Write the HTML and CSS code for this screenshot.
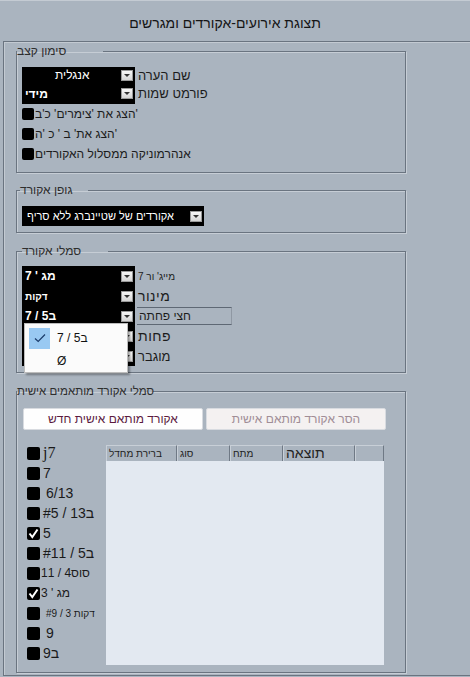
FILE: index.html
```html
<!DOCTYPE html>
<html>
<head>
<meta charset="utf-8">
<title>תצוגת אירועים-אקורדים ומגרשים</title>
<link rel="stylesheet" href="styles.css">
</head>
<body>
<div class="window">
  <header class="titlebar">תצוגת אירועים-אקורדים ומגרשים</header>
  <main class="frame">

    <fieldset class="group g1">
      <legend class="lg1">סימון קצב</legend>
      <div class="field h16">
        <div class="select"><span class="val v-name">אנגלית</span><span class="arrow"></span></div>
        <span class="label">שם הערה</span>
      </div>
      <div class="field h21">
        <div class="select"><span class="val bold">מידי</span><span class="arrow"></span></div>
        <span class="label">פורמט שמות</span>
      </div>
      <div class="check"><span class="box"></span><span class="ctext">הצג את 'צימרים' כ'ב'</span></div>
      <div class="check"><span class="box"></span><span class="ctext">הצג את' ב ' כ 'ה'</span></div>
      <div class="check"><span class="box"></span><span class="ctext">אנהרמוניקה ממסלול האקורדים</span></div>
    </fieldset>

    <fieldset class="group g2">
      <legend class="lg2">גופן אקורד</legend>
      <div class="field h20">
        <div class="select wide"><span class="val font">אקורדים של שטיינברג ללא סריף</span><span class="arrow"></span></div>
      </div>
    </fieldset>

    <fieldset class="group g3">
      <legend class="lg3">סמלי אקורד</legend>
      <div class="symbols">
        <div class="field h20">
          <div class="select"><span class="val bold">מג ' 7</span><span class="arrow"></span></div>
          <span class="label small">מייג' ור 7</span>
        </div>
        <div class="field h20">
          <div class="select"><span class="val bold tiny">דקות</span><span class="arrow"></span></div>
          <span class="label big">מינור</span>
        </div>
        <div class="field h20">
          <div class="select"><span class="val bold">ב5 / 7</span><span class="arrow"></span></div>
          <span class="label boxed">חצי פחתה</span>
        </div>
        <div class="field h20">
          <div class="select"><span class="val bold">o</span><span class="arrow"></span></div>
          <span class="label big">פחות</span>
        </div>
        <div class="field h20">
          <div class="select"><span class="val bold">+</span><span class="arrow"></span></div>
          <span class="label">מוגבר</span>
        </div>
        <div class="popup">
          <div class="item selected"><span class="tick"><svg width="12" height="10" viewBox="0 0 12 10"><path d="M1 5.5 L4.2 8.5 L11 1.5" fill="none" stroke="#1b3c6b" stroke-width="1.2"/></svg></span><span class="itext">ב5 / 7</span></div>
          <div class="item"><span class="tick"></span><span class="itext">Ø</span></div>
        </div>
      </div>
    </fieldset>

    <fieldset class="group g4">
      <legend class="lg4">סמלי אקורד מותאמים אישית</legend>
      <div class="buttons">
        <button class="btn primary">אקורד מותאם אישית חדש</button>
        <button class="btn disabled">הסר אקורד מותאם אישית</button>
      </div>
      <div class="custom">
        <div class="checklist">
          <div class="citem"><span class="box"></span><span class="ltext serif">j7</span></div>
          <div class="citem"><span class="box"></span><span class="ltext">7</span></div>
          <div class="citem"><span class="box"></span><span class="ltext pad">6/13</span></div>
          <div class="citem"><span class="box"></span><span class="ltext">ב13 / #5</span></div>
          <div class="citem"><span class="box checked"><svg width="13" height="13" viewBox="0 0 13 13"><path d="M2.5 6.5 L5.3 10 L10.5 2.5" fill="none" stroke="#fff" stroke-width="2"/></svg></span><span class="ltext">5</span></div>
          <div class="citem"><span class="box"></span><span class="ltext">ב5 / #11</span></div>
          <div class="citem"><span class="box"></span><span class="ltext mid">סוס4 / 11</span></div>
          <div class="citem"><span class="box checked"><svg width="13" height="13" viewBox="0 0 13 13"><path d="M2.5 6.5 L5.3 10 L10.5 2.5" fill="none" stroke="#fff" stroke-width="2"/></svg></span><span class="ltext mid">מג ' 3</span></div>
          <div class="citem"><span class="box"></span><span class="ltext small pad">דקות 3 / #9</span></div>
          <div class="citem"><span class="box"></span><span class="ltext pad">9</span></div>
          <div class="citem"><span class="box"></span><span class="ltext">ב9</span></div>
        </div>
        <div class="table">
          <div class="th small">ברירת מחדל</div>
          <div class="th small">סוג</div>
          <div class="th small">מתח</div>
          <div class="th large">תוצאה</div>
          <div class="th"></div>
          <div class="tbody"></div>
        </div>
      </div>
    </fieldset>

  </main>
</div>
</body>
</html>
```

FILE: styles.css
```css
* { box-sizing: border-box; }
html, body { margin: 0; padding: 0; }
body {
  width: 470px;
  height: 677px;
  overflow: hidden;
  background: #aab4bf;
  font-family: "Liberation Sans", "DejaVu Sans", sans-serif;
  color: #1c1c1c;
}
.window {
  border-top: 1px solid #c4cbd3;
}
.titlebar {
  height: 40px;
  padding: 13px 20px 0 0;
  text-align: center;
  font-size: 14px;
  line-height: 18px;
  color: #151515;
}
.frame {
  margin-left: 3px;
  border-left: 1px solid #6a7480;
  border-top: 1px solid #6a7480;
  border-bottom: 1px solid #6a7480;
  box-shadow: inset 1px 1px 0 #c3cad2;
  padding: 2px 0 2px 12px;
}
.group {
  width: 390px;
  margin: 0;
  min-width: 0;
  border: 1px solid #6a7480;
  box-shadow: 1px 1px 0 #c6cdd5, inset 1px 1px 0 #c6cdd5;
  padding: 0 0 0 5px;
}
.group + .group { margin-top: 11px; }
.g2 { margin-top: 10px !important; }
.group legend {
  padding: 0;
  height: 14px;
  font-size: 12px;
  line-height: 14px;
  color: #2e2e2e;
  text-align: left;
  white-space: nowrap;
}
.lg1 { width: 86px; margin-left: -5px; }
.lg2 { width: 68px; margin-left: -2px; }
.lg3 { width: 86px; margin-left: 0; }
.lg4 { width: 136px; margin-left: -6px; font-size: 11.5px !important; }

.g1 { padding-top: 9px; padding-bottom: 8px; }
.g2 { padding-top: 9px; padding-bottom: 6px; }
.g3 { padding-top: 8px; padding-bottom: 6px; }
.g4 { padding-top: 10px; padding-bottom: 7px; padding-left: 6px; }

.field { display: flex; align-items: center; }
.h16 { height: 16px; }
.h20 { height: 20px; }
.h21 { height: 21px; }
.select {
  width: 113px;
  height: 100%;
  background: #000;
  color: #fff;
  display: flex;
  align-items: center;
  padding-left: 3px;
  font-size: 12px;
  overflow: hidden;
}
.select.wide { width: 182px; padding-left: 5px; }
.val { white-space: nowrap; }
.v-name { padding-left: 30px; font-weight: normal; }
.bold { font-weight: bold; }
.font { font-size: 11px; }
.tiny { font-size: 10px; }
.arrow {
  margin-left: auto;
  margin-right: 2px;
  width: 12px;
  height: 11px;
  background: linear-gradient(#f7f7f7, #d5d5d5);
  border: 1px solid #9a9a9a;
  position: relative;
  flex: none;
}
.arrow::after {
  content: "";
  position: absolute;
  left: 2px;
  top: 3px;
  border-left: 3px solid transparent;
  border-right: 3px solid transparent;
  border-top: 3px solid #333;
}
.label {
  margin-left: 3px;
  font-size: 13px;
  white-space: nowrap;
}
.label.small { font-size: 10px; }
.label.big { font-size: 14px; letter-spacing: 0.5px; }
.label.boxed {
  height: 18px;
  width: 95px;
  margin-left: 2px;
  padding-left: 2px;
  border-top: 1px solid #5e6874;
  border-bottom: 1px solid #5e6874;
  border-right: 1px solid #8f98a3;
  font-size: 12px;
  line-height: 16px;
}

.check {
  display: flex;
  align-items: center;
  height: 20px;
}
.box {
  width: 12px;
  height: 12px;
  background: #000;
  border-radius: 2px;
  flex: none;
  display: flex;
}
.ctext { font-size: 12px; white-space: nowrap; margin-left: 1px; }
.g1 .check:first-of-type { margin-top: 1px; }

.symbols { position: relative; }
.popup {
  position: absolute;
  left: 2px;
  top: 57px;
  width: 104px;
  height: 50px;
  background: #fbfbfb;
  border: 1px solid #bcbcbc;
  box-shadow: 2px 2px 2px rgba(0,0,0,0.35);
  padding: 3px 0 0 4px;
}
.item { display: flex; align-items: center; height: 22px; }
.item + .item { margin-top: 1px; }
.tick {
  width: 21px;
  height: 21px;
  display: flex;
  align-items: center;
  justify-content: center;
}
.item.selected .tick { background: #99c9f2; }
.itext { margin-left: 7px; font-size: 12px; color: #111; }

.buttons { display: flex; gap: 3px; }
.btn {
  width: 180px;
  height: 22px;
  margin: 0;
  border: 1px solid #d8dbe0;
  border-radius: 2px;
  font-family: inherit;
  font-size: 12px;
  padding: 0;
}
.btn.primary { background: #fefefe; color: #5b1a3e; }
.btn.disabled { background: #f4f1f1; color: #a08d96; }

.custom {
  display: flex;
  margin-top: 13px;
}
.checklist {
  width: 83px;
  padding-left: 4px;
}
.citem {
  display: flex;
  align-items: center;
  height: 20px;
}
.citem .box { width: 13px; height: 13px; align-items: center; justify-content: center; }
.ltext { margin-left: 3px; font-size: 14px; white-space: nowrap; color: #1a1a1a; }
.ltext.serif { font-family: "Liberation Serif", serif; font-size: 16px; }
.ltext.pad { margin-left: 6px; }
.ltext.mid { font-size: 12px; margin-left: 1px; }
.ltext.small { font-size: 10px; }

.table {
  margin-top: 2px;
  width: 278px;
  display: grid;
  grid-template-columns: 71px 53px 53px 72px 29px;
  grid-template-rows: 16px 204px;
  align-self: flex-start;
}
.th {
  border-top: 1px solid #c8cfd7;
  border-left: 1px solid #c8cfd7;
  border-right: 1px solid #6f7985;
  font-size: 10px;
  line-height: 15px;
  padding-left: 2px;
  color: #222;
  white-space: nowrap;
}
.th.large { font-size: 14px; line-height: 15px; }
.tbody {
  grid-column: 1 / -1;
  background: #e3e9f1;
}
```
